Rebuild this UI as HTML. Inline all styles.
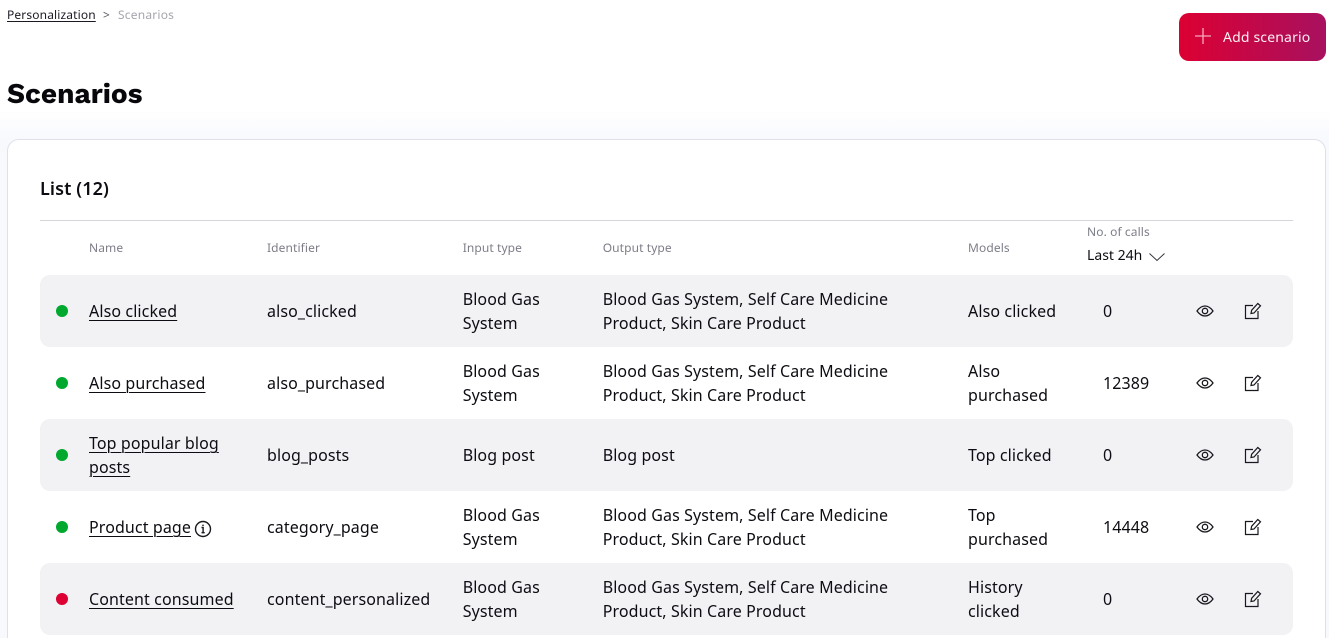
<!DOCTYPE html>
<html><head><meta charset="utf-8"><style>
html,body{margin:0;padding:0;background:#fff}
#w{width:1329px;height:638px;overflow:hidden;position:relative;background:#fff;font-family:"Noto Sans","Liberation Sans","DejaVu Sans",sans-serif;color:#1a1a24}
.a{position:absolute;white-space:nowrap}
.bg{position:absolute;left:0;top:110px;width:1329px;height:528px;background:linear-gradient(#fff,#f8f9fd 30px)}
.card{position:absolute;left:7px;top:139px;width:1317px;height:520px;border:1px solid #dfe0ea;border-radius:12px;background:#fff}
.h{font-size:12px;line-height:16px;color:#7d7d88;letter-spacing:.1px}
.row{position:absolute;left:40px;width:1253px;height:72px;border-radius:10px}
.g{background:#f2f2f5}
.t{position:absolute;font-size:16px;line-height:24px;color:#0c0c12;white-space:nowrap;letter-spacing:.11px}
.l{text-decoration:underline;text-underline-offset:3px;text-decoration-thickness:1px}
.d{position:absolute;left:16px;top:30px;width:12px;height:12px;border-radius:50%;background:#00a82d}
.r{background:#dc0033}
svg.i{position:absolute;fill:none;stroke:#18181e}
</style></head><body><div id="w">
<div class="bg"></div>
<div class="a" style="left:7px;top:6px;font-size:12px;line-height:17px;letter-spacing:.13px;color:#1a1a24;text-decoration:underline;text-underline-offset:2px">Personalization</div>
<div class="a" style="left:103px;top:6px;font-size:12px;line-height:17px;color:#55555e">&gt;</div>
<div class="a" style="left:118px;top:6px;font-size:12px;line-height:17px;letter-spacing:.2px;color:#a5a5ad">Scenarios</div>
<div style="position:absolute;left:1179px;top:13px;width:147px;height:48px;border-radius:10px;background:linear-gradient(90deg,#dc0033,#a8115f)"></div>
<svg class="a" style="left:1195px;top:28px" width="16" height="16"><path d="M8 0V16M0 8H16" stroke="#f5a9bd" stroke-width="1.300"/></svg>
<div class="a" style="left:1223px;top:27px;font-size:14px;line-height:21px;letter-spacing:.16px;color:#fdf0f4">Add scenario</div>
<div class="a" style="left:7px;top:75px;font-family:'Work Sans','Liberation Sans',sans-serif;font-weight:700;font-size:28px;line-height:38px;color:#08080c">Scenarios</div>
<div class="card"></div>
<div class="a" style="left:40px;top:177px;font-size:18px;line-height:24px;font-weight:600;letter-spacing:.1px;color:#0c0c12">List (12)</div>
<div style="position:absolute;left:40px;top:220px;width:1253px;height:1px;background:#d6d6da"></div>
<div class="a h" style="left:89px;top:240px">Name</div>
<div class="a h" style="left:267px;top:240px">Identifier</div>
<div class="a h" style="left:462.700px;top:240px">Input type</div>
<div class="a h" style="left:602.700px;top:240px">Output type</div>
<div class="a h" style="left:968px;top:240px">Models</div>
<div class="a h" style="left:1087px;top:224px">No. of calls</div>
<div class="a" style="left:1087px;top:246px;font-size:14px;line-height:20px;color:#0c0c12">Last 24h</div>
<svg class="a" style="left:1147.500px;top:252px" width="18" height="10"><path d="M1.500 1.500L9 8.500L16.500 1.500" fill="none" stroke="#33333a" stroke-width="1"/></svg>

<div class="row g" style="top:275px"><div class="d"></div></div>
<div class="t l" style="left:89px;top:299px">Also clicked</div>
<div class="t" style="left:267px;top:299px">also_clicked</div>
<div class="t" style="left:462.700px;top:287px">Blood Gas<br>System</div>
<div class="t" style="left:602.700px;top:287px">Blood Gas System, Self Care Medicine<br>Product, Skin Care Product</div>
<div class="t" style="left:968px;top:299px">Also clicked</div>
<div class="t" style="left:1103px;top:299px">0</div>

<div class="row" style="top:347px"><div class="d"></div></div>
<div class="t l" style="left:89px;top:371px">Also purchased</div>
<div class="t" style="left:267px;top:371px">also_purchased</div>
<div class="t" style="left:462.700px;top:359px">Blood Gas<br>System</div>
<div class="t" style="left:602.700px;top:359px">Blood Gas System, Self Care Medicine<br>Product, Skin Care Product</div>
<div class="t" style="left:968px;top:359px">Also<br>purchased</div>
<div class="t" style="left:1103px;top:371px">12389</div>

<div class="row g" style="top:419px"><div class="d"></div></div>
<div class="t l" style="left:89px;top:431px">Top popular blog<br>posts</div>
<div class="t" style="left:267px;top:443px">blog_posts</div>
<div class="t" style="left:462.700px;top:443px">Blog post</div>
<div class="t" style="left:602.700px;top:443px">Blog post</div>
<div class="t" style="left:968px;top:443px">Top clicked</div>
<div class="t" style="left:1103px;top:443px">0</div>

<div class="row" style="top:491px"><div class="d"></div></div>
<div class="t l" style="left:89px;top:515px">Product page</div>
<svg class="i" style="left:194px;top:519.500px" width="18" height="18"><circle cx="9" cy="9" r="7.500" stroke-width="1.400"/><path d="M7.500 7.500H9.100V12.700M7.500 12.700H10.700M9 4.600V6" stroke-width="1.400"/></svg>
<div class="t" style="left:267px;top:515px">category_page</div>
<div class="t" style="left:462.700px;top:503px">Blood Gas<br>System</div>
<div class="t" style="left:602.700px;top:503px">Blood Gas System, Self Care Medicine<br>Product, Skin Care Product</div>
<div class="t" style="left:968px;top:503px">Top<br>purchased</div>
<div class="t" style="left:1103px;top:515px">14448</div>

<div class="row g" style="top:563px"><div class="d r"></div></div>
<div class="t l" style="left:89px;top:587px">Content consumed</div>
<div class="t" style="left:267px;top:587px">content_personalized</div>
<div class="t" style="left:462.700px;top:575px">Blood Gas<br>System</div>
<div class="t" style="left:602.700px;top:575px">Blood Gas System, Self Care Medicine<br>Product, Skin Care Product</div>
<div class="t" style="left:968px;top:575px">History<br>clicked</div>
<div class="t" style="left:1103px;top:587px">0</div>

<svg class="i" style="left:1196px;top:304px" width="18" height="14"><path d="M1 7C3.500 3.500 6 2 9 2S14.500 3.500 17 7C14.500 10.500 12 12 9 12S3.500 10.500 1 7Z" stroke-width="1.300"/><circle cx="9" cy="7" r="2.700" stroke-width="1.300"/></svg>
<svg class="i" style="left:1244px;top:302px" width="18" height="18"><path d="M9 3.500H1.500V16.500H14V9M7 11.500L7.600 8.300L13.800 1.500L16.500 3.800L10 11Z" stroke-width="1.200"/></svg>
<svg class="i" style="left:1196px;top:376px" width="18" height="14"><path d="M1 7C3.500 3.500 6 2 9 2S14.500 3.500 17 7C14.500 10.500 12 12 9 12S3.500 10.500 1 7Z" stroke-width="1.300"/><circle cx="9" cy="7" r="2.700" stroke-width="1.300"/></svg>
<svg class="i" style="left:1244px;top:374px" width="18" height="18"><path d="M9 3.500H1.500V16.500H14V9M7 11.500L7.600 8.300L13.800 1.500L16.500 3.800L10 11Z" stroke-width="1.200"/></svg>
<svg class="i" style="left:1196px;top:448px" width="18" height="14"><path d="M1 7C3.500 3.500 6 2 9 2S14.500 3.500 17 7C14.500 10.500 12 12 9 12S3.500 10.500 1 7Z" stroke-width="1.300"/><circle cx="9" cy="7" r="2.700" stroke-width="1.300"/></svg>
<svg class="i" style="left:1244px;top:446px" width="18" height="18"><path d="M9 3.500H1.500V16.500H14V9M7 11.500L7.600 8.300L13.800 1.500L16.500 3.800L10 11Z" stroke-width="1.200"/></svg>
<svg class="i" style="left:1196px;top:520px" width="18" height="14"><path d="M1 7C3.500 3.500 6 2 9 2S14.500 3.500 17 7C14.500 10.500 12 12 9 12S3.500 10.500 1 7Z" stroke-width="1.300"/><circle cx="9" cy="7" r="2.700" stroke-width="1.300"/></svg>
<svg class="i" style="left:1244px;top:518px" width="18" height="18"><path d="M9 3.500H1.500V16.500H14V9M7 11.500L7.600 8.300L13.800 1.500L16.500 3.800L10 11Z" stroke-width="1.200"/></svg>
<svg class="i" style="left:1196px;top:592px" width="18" height="14"><path d="M1 7C3.500 3.500 6 2 9 2S14.500 3.500 17 7C14.500 10.500 12 12 9 12S3.500 10.500 1 7Z" stroke-width="1.300"/><circle cx="9" cy="7" r="2.700" stroke-width="1.300"/></svg>
<svg class="i" style="left:1244px;top:590px" width="18" height="18"><path d="M9 3.500H1.500V16.500H14V9M7 11.500L7.600 8.300L13.800 1.500L16.500 3.800L10 11Z" stroke-width="1.200"/></svg>
</div></body></html>
